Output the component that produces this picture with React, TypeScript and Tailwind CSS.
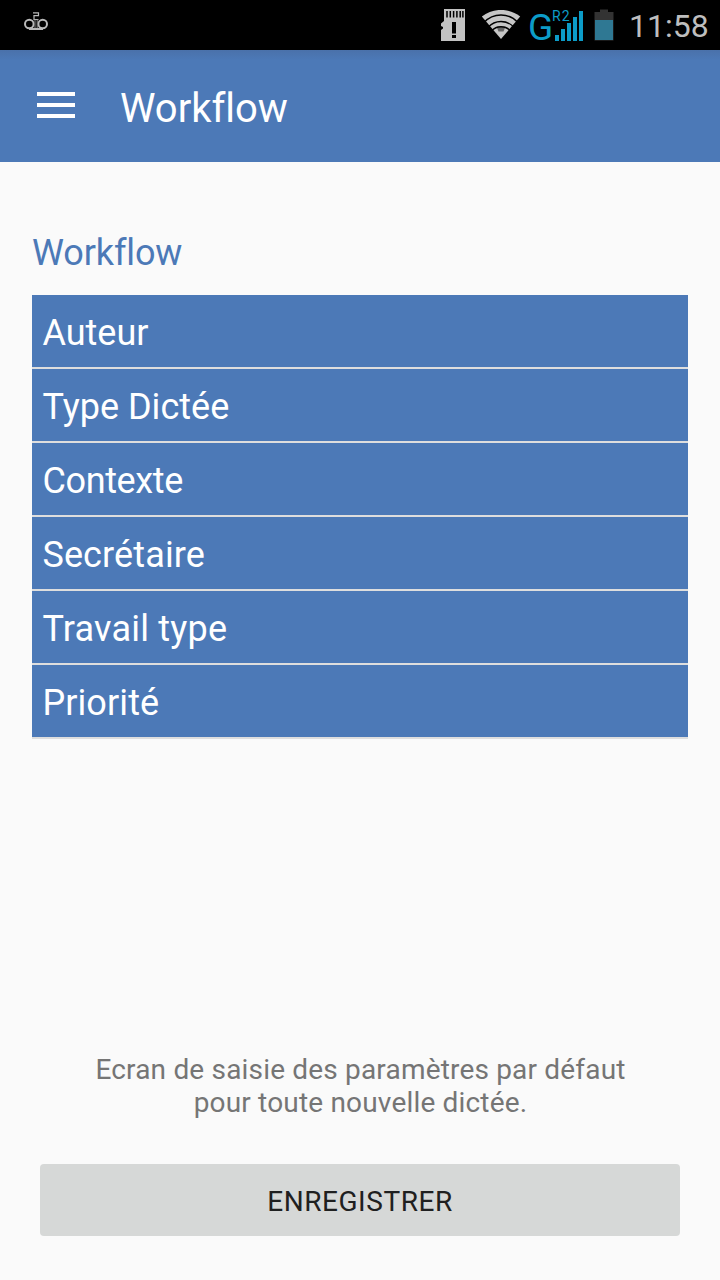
const fields = [
  { label: 'Auteur', tracking: 'tracking-normal' },
  { label: 'Type Dictée', tracking: 'tracking-[0.02px]' },
  { label: 'Contexte', tracking: 'tracking-[-0.35px]' },
  { label: 'Secrétaire', tracking: 'tracking-[0.13px]' },
  { label: 'Travail type', tracking: 'tracking-[0.22px]' },
  { label: 'Priorité', tracking: 'tracking-[0.1px]' },
];

function VoicemailIcon() {
  return (
    <svg className="block" width="24" height="20" viewBox="0 0 24 20" fill="none" stroke="#b9b9b9">
      <circle cx="5.3" cy="12" r="4.3" strokeWidth="2" />
      <circle cx="18.7" cy="12" r="4.3" strokeWidth="2" />
      <path d="M5 17H19" strokeWidth="2" />
      <path d="M9 .8H14.500V3.600H10V7.500H14.500" strokeWidth="1.2" />
      <path d="M11 7.500V16M13.200 7.500V16" strokeWidth="1" stroke="#888" />
    </svg>
  );
}

function SdCardIcon() {
  return (
    <svg className="block" width="24" height="32" viewBox="0 0 24 32">
      <path d="M3 0H24V32H0V21L2 19.500V18L0 17V14.500L3 12Z" fill="#c2c2c2" />
      <path d="M6 2V8.500M9.300 2V8.500M12.600 2V8.500M15.900 2V8.500M19.200 2V8.500M21.900 2V8.500" stroke="#000" strokeWidth="1.500" />
      <path d="M11 13H15V24.500H11ZM11 26H15V29H11Z" fill="#000" />
    </svg>
  );
}

function WifiIcon() {
  return (
    <svg className="block" width="40" height="30" viewBox="0 0 40 30">
      <path d="M.8 6.500C12-2.300 28-2.300 39.200 6.500L20 29Z" fill="#c6c6c6" />
      <path d="M15.500 16.500H24.500L22.500 21.500H17.500Z" fill="#666" />
      <g fill="none" stroke="#000" strokeWidth="1.300">
        <path d="M3 12.500A23 23 0 0 1 37 12.500" />
        <path d="M7 17.300A17.500 17.500 0 0 1 33 17.300" />
        <path d="M10.500 20.800A13.200 13.200 0 0 1 29.500 20.800" />
      </g>
    </svg>
  );
}

function SignalIcon() {
  return (
    <svg className="block" width="28" height="30" viewBox="0 0 28 30" fill="#0c9cc8">
      <path d="M0 24H4V30H0ZM6 18H10V30H6ZM12 12H16V30H12ZM18 6H22V30H18ZM24 0H28V30H24Z" />
    </svg>
  );
}

function BatteryIcon() {
  return (
    <svg className="block" width="20" height="32" viewBox="0 0 20 32">
      <path d="M6 .500H14V3H19.500V31.500H.5V3H6Z" fill="#333" />
      <path d="M1 11H19V31H1Z" fill="#2f7893" />
    </svg>
  );
}

export default function App() {
  return (
    <div className="flex h-[1280px] w-[720px] flex-col overflow-hidden bg-[#fafafa] font-['Roboto',sans-serif]">
      <header className="flex h-[50px] shrink-0 items-start bg-black">
        <div className="ml-6 mt-3">
          <VoicemailIcon />
        </div>
        <div className="ml-auto flex items-start">
          <div className="mt-[9px]"><SdCardIcon /></div>
          <div className="ml-4 mt-[10px]"><WifiIcon /></div>
          <div className="relative ml-[7px] mt-[11px] flex h-[30px] w-[55px] justify-between text-[#0c9cc8]">
            <span className="mt-[-1px] text-[37px] leading-[36px]">G</span>
            <SignalIcon />
            <span className="absolute left-[24px] top-[-3px] text-[14px] leading-4 tracking-[1.2px]">R2</span>
          </div>
          <div className="ml-[11px] mt-[9px]"><BatteryIcon /></div>
          <span className="ml-[15px] mr-[13px] mt-[7px] w-[78px] whitespace-nowrap text-[32px] leading-[38px] text-[#bebebe]">11:58</span>
        </div>
      </header>

      <div className="flex h-28 shrink-0 items-center bg-[linear-gradient(to_bottom,#4a71aa_0px,#4c79b7_10px)] text-white">
        <button className="-mt-0.5 ml-[37px] flex w-[38px] flex-col gap-[7px]" aria-label="Menu">
          <span className="h-1 bg-white" />
          <span className="h-1 bg-white" />
          <span className="h-1 bg-white" />
        </button>
        <h1 className="ml-[45px] mt-1.5 text-[40px] leading-[48px] tracking-[-0.02px]">Workflow</h1>
      </div>

      <main className="flex grow flex-col px-8">
        <h2 className="mt-[69px] text-[36px] leading-[44px] tracking-[-0.12px] text-[#4c79b7]">Workflow</h2>
        <ul className="mt-5">
          {fields.map(({ label, tracking }) => (
            <li key={label} className="flex h-[74px] items-center border-b-2 border-[#dedede] bg-[#4c79b7] px-[10.4px] pt-[3px] text-[36px] leading-[44px] text-white">
              <span className={tracking}>{label}</span>
            </li>
          ))}
        </ul>
        <div className="mt-auto pb-11">
          <p className="pl-px text-center text-[28px] leading-[33px] tracking-[0.18px] text-[#757575]">
            Ecran de saisie des paramètres par défaut
            <br />
            pour toute nouvelle dictée.
          </p>
          <button className="mx-2 mt-[45px] flex h-[72px] w-[640px] items-center justify-center rounded-[4px] bg-[#d6d8d7] pt-[3px] text-[28px] tracking-[0.55px] text-[#1f2020]">
            ENREGISTRER
          </button>
        </div>
      </main>
    </div>
  );
}
